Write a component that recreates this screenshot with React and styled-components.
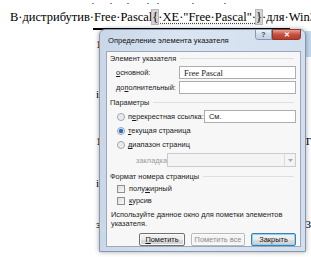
import React from "react";
import styled, { createGlobalStyle } from "styled-components";

const Global = createGlobalStyle`
  html, body { margin: 0; padding: 0; background: #fff; }
  * { box-sizing: border-box; }
`;

const Page = styled.div`
  position: relative;
  width: 311px;
  height: 257px;
  overflow: hidden;
  background: #fff;
  font-family: "Liberation Serif", "Times New Roman", serif;
  color: #000;
`;

const DotsLine = styled.div`
  display: flex;
  height: 9px;
  padding-top: 3px;
`;

const Dot = styled.span`
  width: 2px;
  height: 1px;
  margin-left: ${(p) => p.gap}px;
  background: #8a8a8a;
`;

const TextLine = styled.div`
  height: 17px;
  line-height: 17px;
  padding-left: 10px;
  font-size: 12.5px;
  white-space: nowrap;
  word-spacing: 1px;
`;

const Field = styled.span`
  background: #d4d4d4;
  outline: 1px solid #b8b8b8;
`;

const Hidden = styled.span`
  text-decoration: underline dotted #444;
  text-underline-offset: 2px;
`;

const Rule = styled.div`
  margin: 2px 0 0 93px;
  width: 197px;
  height: 2px;
  background: #000;
`;

const DocLines = styled.div`
  display: flex;
  flex-direction: column;
  margin-left: 96px;
  width: 215px;
  font-size: 11px;
`;

const DocLine = styled.div`
  display: flex;
  justify-content: space-between;
  align-items: center;
  height: ${(p) => p.h}px;
  white-space: nowrap;
`;

const Blue = styled.span`
  width: 6px;
  height: 26px;
  background: #c4d8ef;
`;

const Dialog = styled.div`
  position: absolute;
  left: 99px;
  top: 29px;
  width: 207px;
  height: 223px;
  padding: 0 4px 4px 6px;
  border: 1px solid #8797ad;
  border-radius: 6px 6px 0 0;
  background: linear-gradient(90deg, #c9d7e8, #dae5f2 40%, #d2dfee);
  box-shadow: 0 0 5px rgba(0, 0, 0, 0.35);
  display: flex;
  flex-direction: column;
  font-family: "Liberation Sans", Arial, sans-serif;
  font-size: 7.4px;
  color: #1b1b1b;
`;

const TitleBar = styled.div`
  display: flex;
  align-items: flex-start;
  height: 21px;
`;

const Title = styled.div`
  padding: 6px 0 0 2px;
  font-size: 7.6px;
  color: #111;
`;

const Caption = styled.div`
  display: flex;
  margin: -1px 0 0 auto;
`;

const CapButton = styled.div`
  display: flex;
  align-items: center;
  justify-content: center;
  width: ${(p) => p.w}px;
  height: 11px;
  border: 1px solid ${(p) => (p.danger ? "#8a3a32" : "#8a98ad")};
  border-radius: ${(p) => (p.danger ? "0 0 3px 0" : "0 0 0 3px")};
  background: ${(p) =>
    p.danger
      ? "linear-gradient(#e6a196, #c7503f 50%, #b93a28)"
      : "linear-gradient(#eef3f9, #cfdbea 50%, #c2d1e4)"};
  color: ${(p) => (p.danger ? "#fff" : "#3d4a5c")};
  font-size: 7px;
  font-weight: bold;
`;

const Client = styled.div`
  flex: 1;
  display: flex;
  flex-direction: column;
  padding: 2px 4px 0 3px;
  border: 1px solid #9aa8ba;
  background: #f7f7f7;
`;

const GroupTitle = styled.div`
  display: flex;
  align-items: center;
  gap: 4px;
  height: 9px;
  margin-top: ${(p) => p.mt || 0}px;
  &::after {
    content: "";
    flex: 1;
    height: 1px;
    background: #dcdfe3;
    margin-right: 2px;
  }
`;

const Row = styled.div`
  display: flex;
  align-items: center;
  height: ${(p) => p.h || 13}px;
  margin-top: ${(p) => p.mt || 0}px;
  padding-left: ${(p) => p.indent || 0}px;
`;

const Label = styled.span`
  width: ${(p) => (p.w ? `${p.w}px` : "auto")};
  flex-shrink: 0;
  color: ${(p) => (p.disabled ? "#9a9a9a" : "inherit")};
  u { text-underline-offset: 1px; }
`;

const Input = styled.div`
  flex: 1;
  display: flex;
  align-items: center;
  height: 100%;
  padding-left: 4px;
  border: 1px solid ${(p) => (p.disabled ? "#c9cbce" : "#abadb3")};
  background: ${(p) => (p.disabled ? "#f4f4f4" : "#fff")};
  font-family: ${(p) => (p.serif ? '"Liberation Serif", serif' : "inherit")};
  font-size: ${(p) => (p.serif ? "8.5px" : "inherit")};
`;

const DropArrow = styled.div`
  margin-left: auto;
  width: 11px;
  height: 100%;
  display: flex;
  align-items: center;
  justify-content: center;
  border-left: 1px solid #dcdcdc;
`;

const Radio = styled.span`
  width: 8px;
  height: 8px;
  margin-right: 3px;
  border-radius: 50%;
  border: 1px solid #9aa3ad;
  background: ${(p) =>
    p.checked
      ? "radial-gradient(circle, #2a6ec4 0 1.6px, #7fb0e6 2.2px, #e9eef3 2.6px)"
      : "radial-gradient(circle, #e1e4e8, #f7f8f9)"};
  flex-shrink: 0;
`;

const Check = styled.span`
  width: 8px;
  height: 8px;
  margin-right: 4px;
  border: 1px solid #8f8f8f;
  background: linear-gradient(135deg, #dcdcdc, #fafafa);
  flex-shrink: 0;
`;

const Hint = styled.div`
  margin-top: 4px;
  padding-left: 1px;
  line-height: 9px;
  width: 190px;
`;

const Buttons = styled.div`
  display: flex;
  justify-content: flex-end;
  gap: 6px;
  margin-top: 5px;
`;

const Button = styled.div`
  width: ${(p) => p.w}px;
  height: 13px;
  display: flex;
  align-items: center;
  justify-content: center;
  border: 1px solid ${(p) => (p.disabled ? "#b5b9bd" : p.primary ? "#3c7fb1" : "#707070")};
  border-radius: 2px;
  background: ${(p) =>
    p.disabled
      ? "#f4f4f4"
      : "linear-gradient(#f2f2f2, #ebebeb 50%, #dddddd 51%, #cfcfcf)"};
  box-shadow: ${(p) => (p.primary ? "inset 0 0 0 1px #8dd3f5" : "inset 0 0 0 1px #fbfbfb")};
  color: ${(p) => (p.disabled ? "#8d8d8d" : "#111")};
`;

const dots = [92, 16, 15, 18, 8, 33, 30];

export default function App() {
  return (
    <Page>
      <Global />
      <DotsLine>
        {dots.map((g, i) => (
          <Dot key={i} gap={g} />
        ))}
      </DotsLine>
      <TextLine>
        В·дистрибутив·Free·Pascal<Field>{"{"}</Field>
        <Hidden>·XE·"Free·Pascal"·</Hidden>
        <Field>{"}"}</Field>·для·Win32
      </TextLine>
      <Rule />
      <DocLines>
        <DocLine h={27}>
          <span>1</span>
          <Blue />
        </DocLine>
        <DocLine h={74}>
          <span>і</span>
          <span />
        </DocLine>
        <DocLine h={20}>
          <span>1</span>
          <span>Т</span>
        </DocLine>
        <DocLine h={63}>
          <span>і</span>
          <span />
        </DocLine>
        <DocLine h={20}>
          <span>з</span>
          <span>З</span>
        </DocLine>
      </DocLines>

      <Dialog>
        <TitleBar>
          <Title>Определение элемента указателя</Title>
          <Caption>
            <CapButton w={17}>?</CapButton>
            <CapButton w={29} danger>
              ✕
            </CapButton>
          </Caption>
        </TitleBar>
        <Client>
          <GroupTitle>Элемент указателя</GroupTitle>
          <Row mt={3} indent={6}>
            <Label w={63}>
              <u>о</u>сновной:
            </Label>
            <Input serif>Free Pascal</Input>
          </Row>
          <Row mt={2} indent={6}>
            <Label w={63}>
              до<u>п</u>олнительный:
            </Label>
            <Input />
          </Row>
          <GroupTitle mt={4}>Параметры</GroupTitle>
          <Row mt={3} indent={7}>
            <Radio />
            <Label w={76}>
              п<u>е</u>рекрестная ссылка:
            </Label>
            <Input>См.</Input>
          </Row>
          <Row mt={1} indent={7}>
            <Radio checked />
            <Label>
              <u>т</u>екущая страница
            </Label>
          </Row>
          <Row mt={1} indent={7}>
            <Radio />
            <Label>
              <u>д</u>иапазон страниц
            </Label>
          </Row>
          <Row h={14} mt={2} indent={26}>
            <Label w={31} disabled>
              закладка:
            </Label>
            <Input disabled>
              <DropArrow>
                <svg width="5" height="3" viewBox="0 0 5 3">
                  <path d="M0 0h5L2.5 3z" fill="#a8a8a8" />
                </svg>
              </DropArrow>
            </Input>
          </Row>
          <GroupTitle mt={5}>Формат номера страницы</GroupTitle>
          <Row h={11} mt={2} indent={7}>
            <Check />
            <Label>
              полу<u>ж</u>ирный
            </Label>
          </Row>
          <Row h={11} mt={1} indent={7}>
            <Check />
            <Label>
              <u>к</u>урсив
            </Label>
          </Row>
          <Hint>Используйте данное окно для пометки элементов указателя.</Hint>
          <Buttons>
            <Button w={46}>
              <span>
                <u>П</u>ометить
              </span>
            </Button>
            <Button w={54} disabled>
              Пометить все
            </Button>
            <Button w={45} primary>
              Закрыть
            </Button>
          </Buttons>
        </Client>
      </Dialog>
    </Page>
  );
}
